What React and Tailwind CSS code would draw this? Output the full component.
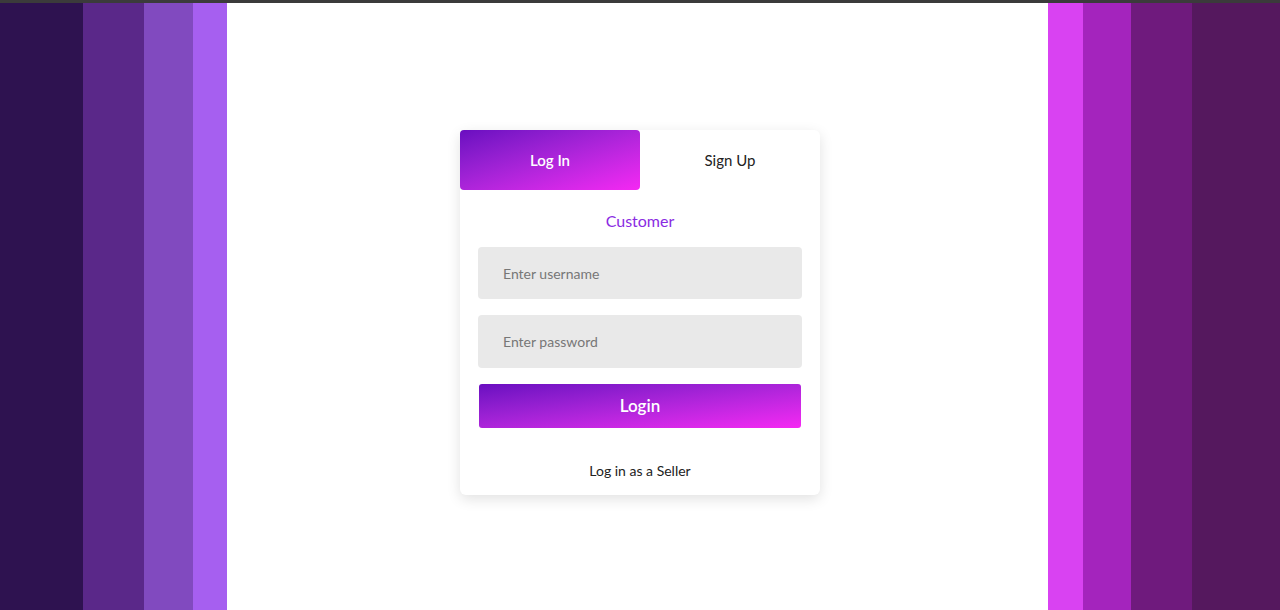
import React, { useState } from 'react';

const LEFT_STRIPES = [
  'w-[83px] bg-[#2e1250]',
  'w-[61px] bg-[#5a2889]',
  'w-[49px] bg-[#814abf]',
  'w-[34px] bg-[#a65ff0]',
];

const RIGHT_STRIPES = [
  'w-[35px] bg-[#d942f2]',
  'w-[48px] bg-[#a424bd]',
  'w-[61px] bg-[#6f1a7d]',
  'w-[88px] bg-[#55185e]',
];

export default function App() {
  const [tab, setTab] = useState('login');

  return (
    <div className="h-[610px] w-full flex flex-col font-['Lato','Noto_Sans',sans-serif] overflow-hidden">
      <div className="h-[3px] bg-[#3b3b3b] shrink-0" />
      <div className="flex flex-1">
        {LEFT_STRIPES.map((c) => (
          <div key={c} className={`${c} shrink-0`} />
        ))}

        <main className="flex-1 bg-white flex justify-center pt-[127px] pl-[5px]">
          <div className="w-[360px] h-[365px] bg-white rounded-md shadow-[0_4px_14px_rgba(0,0,0,0.12)] flex flex-col">
            <div className="flex h-[60px]">
              <button
                onClick={() => setTab('login')}
                className="flex-1 rounded-[4px] bg-gradient-to-br from-[#6a0dc0] to-[#f527f3] text-white text-[15px] font-semibold"
              >
                Log In
              </button>
              <button
                onClick={() => setTab('signup')}
                className="flex-1 text-[#222] text-[15px]"
              >
                Sign Up
              </button>
            </div>

            <div className="flex flex-col px-[18px]">
              <p className="text-center text-[#8a2be2] text-[16px] mt-[21px] leading-5">Customer</p>

              <input
                placeholder="Enter username"
                className="mt-[16px] h-[52px] rounded-[4px] bg-[#e9e9e9] pl-[25px] text-[14px] placeholder:text-[#777] outline-none"
              />
              <input
                type="password"
                placeholder="Enter password"
                className="mt-[16px] h-[53px] rounded-[4px] bg-[#e9e9e9] pl-[25px] text-[14px] placeholder:text-[#777] outline-none"
              />

              <button className="mt-[16px] mx-px h-[44px] rounded-[3px] bg-gradient-to-br from-[#6a0dc0] to-[#f527f3] text-white text-[17px] font-semibold">
                Login
              </button>

              <p className="text-center text-[#222] text-[14px] mt-[33px] leading-5">Log in as a Seller</p>
            </div>
          </div>
        </main>

        {RIGHT_STRIPES.map((c) => (
          <div key={c} className={`${c} shrink-0`} />
        ))}
      </div>
    </div>
  );
}
